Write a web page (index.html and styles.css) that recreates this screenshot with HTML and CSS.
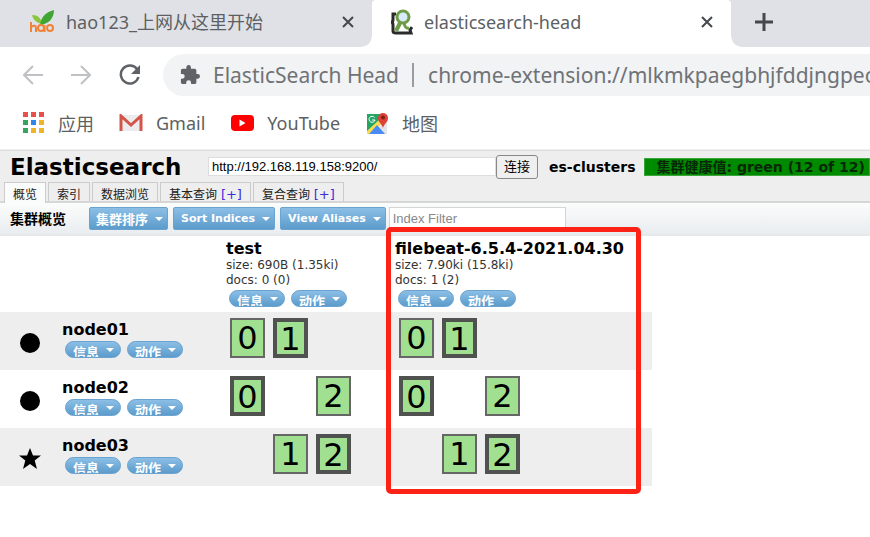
FILE: index.html
```html
<!DOCTYPE html>
<html lang="zh-CN">
<head>
<meta charset="utf-8">
<title>elasticsearch-head</title>
<link rel="stylesheet" href="styles.css">
</head>
<body>
<header class="browser">
  <div class="tabstrip">
    <div class="tab tab-first">
      <svg class="tab-icon" width="26" height="26" viewBox="0 0 26 26">
        <path d="M3 6C9 6 12 9 13 15C8 14 4 11 3 6Z" fill="#8cc63f"/>
        <path d="M11 16C12 8 17 3 25 1C25 9 20 15 11 16Z" fill="#3fa535"/>
        <g fill="none" stroke="#f08337" stroke-width="2"><path d="M2 13v10M2 18q5-3 5 1v4"/><circle cx="12" cy="19" r="3"/><path d="M15.500 16v7"/><circle cx="21" cy="19" r="3"/></g>
      </svg>
      <span class="tab-title">hao123_上网从这里开始</span>
      <button class="icon-button" aria-label="关闭"><svg width="14" height="14" viewBox="0 0 14 14"><path d="M2 2l10 10M12 2L2 12" stroke="#45484c" stroke-width="2" fill="none"/></svg></button>
    </div>
    <div class="tab tab-active">
      <svg class="tab-icon" width="24" height="26" viewBox="0 0 24 26">
        <path d="M7 5H4v6q0 2-2 2q2 0 2 3v6q0 2 3 2h15l-1-3l2-3" fill="none" stroke="#2b2b2b" stroke-width="3"/>
        <path d="M12 12L7 22" stroke="#6f9c48" stroke-width="4"/><path d="M15 14q1 6 5 5" fill="none" stroke="#6f9c48" stroke-width="3"/>
        <circle cx="14" cy="8" r="6" fill="#d9eafa" stroke="#6f9c48" stroke-width="3"/>
      </svg>
      <span class="tab-title">elasticsearch-head</span>
      <button class="icon-button" aria-label="关闭"><svg width="14" height="14" viewBox="0 0 14 14"><path d="M2 2l10 10M12 2L2 12" stroke="#45484c" stroke-width="2" fill="none"/></svg></button>
    </div>
    <button class="icon-button new-tab" aria-label="新标签页"><svg width="18" height="18" viewBox="0 0 18 18"><path d="M9 0v18M0 9h18" stroke="#45484c" stroke-width="3"/></svg></button>
  </div>

  <div class="toolbar">
    <button class="icon-button" aria-label="后退"><svg width="20" height="20" viewBox="0 0 20 20"><path d="M20 10H2M10 1L1 10l9 9" fill="none" stroke="#bfc1c4" stroke-width="2"/></svg></button>
    <button class="icon-button" aria-label="前进"><svg width="20" height="20" viewBox="0 0 20 20"><path d="M0 10h18M10 1l9 9l-9 9" fill="none" stroke="#bfc1c4" stroke-width="2"/></svg></button>
    <button class="icon-button reload" aria-label="刷新"><svg width="22" height="22" viewBox="0 0 22 22"><path d="M18 5A9 9 0 1 0 19.500 13" fill="none" stroke="#5f6368" stroke-width="2.500"/><path d="M21 1v9h-9z" fill="#5f6368"/></svg></button>
    <form class="omnibox">
      <svg width="20" height="20" viewBox="1 1 22 22"><path fill="#5f6368" d="M20.500 11H19V7c0-1.100-.9-2-2-2h-4V3.500a2.500 2.500 0 0 0-5 0V5H4c-1.100 0-2 .9-2 2v3.800h1.500a2.700 2.700 0 0 1 0 5.400H2V20c0 1.100.9 2 2 2h3.800v-1.500a2.700 2.700 0 0 1 5.400 0V22H17c1.100 0 2-.9 2-2v-4h1.500a2.500 2.500 0 0 0 0-5z"/></svg>
      <label class="page-name" for="address">ElasticSearch Head</label>
      <input class="address" id="address" value="chrome-extension://mlkmkpaegbhjfddjngpeolfljgkpoejk">
    </form>
  </div>

  <nav class="bookmarks">
    <a href="#apps"><svg width="22" height="22" viewBox="0 0 22 22"><path fill="#e8504a" d="M0 0h5v5H0zM8 0h5v5H8zM16 0h5v5h-5z"/><path fill="#3aa35a" d="M0 8h5v5H0zM0 16h5v5H0z"/><path fill="#2f86ea" d="M8 8h5v5H8z"/><path fill="#f0b429" d="M16 8h5v5h-5zM8 16h5v5H8zM16 16h5v5h-5z"/></svg>应用</a>
    <a href="#gmail"><svg width="24" height="18" viewBox="0 0 24 18"><path d="M2 1h20v16H2z" fill="#ececec"/><path d="M2 17V2l10 9l10-9v15" fill="none" stroke="#d3544a" stroke-width="3"/></svg>Gmail</a>
    <a href="#youtube"><svg width="24" height="18" viewBox="0 0 24 18"><rect x="1" y="1" width="23" height="16" rx="4" fill="#f00"/><path d="M9.500 5.500v7l6-3.500z" fill="#fff"/></svg>YouTube</a>
    <a href="#maps"><svg width="24" height="24" viewBox="0 0 24 24"><path d="M2 3h20v20H2z" fill="#e3e5e8"/><path d="M2 3h15v5L2 22z" fill="#23a566"/><path d="M2 20L15 8l3 3L6 23H2z" fill="#fddc4f"/><path d="M12 14l8 9H4z" fill="#4b8bf5"/><path d="M9.500 6.500A3 3 0 1 0 10 9H7" fill="none" stroke="#fff"/><path d="M18 18c0-5-5-6-5-11a5 5 0 0 1 10 0c0 5-5 6-5 11z" fill="#dc4237"/><circle cx="18" cy="6.500" r="2" fill="#7d2019"/></svg>地图</a>
  </nav>
</header>

<main>
  <form class="cluster-head">
    <h1>Elasticsearch</h1>
    <input class="cluster-url" aria-label="集群地址" value="http://192.168.119.158:9200/">
    <button class="connect" type="button">连接</button>
    <strong class="cluster-name">es-clusters</strong>
    <strong class="health">集群健康值: green (12 of 12)</strong>
  </form>
  <nav class="views">
    <a class="view view-current" href="#overview">概览</a>
    <a class="view" href="#indices">索引</a>
    <a class="view" href="#browser">数据浏览</a>
    <a class="view" href="#query">基本查询 <span class="plus">[+]</span></a>
    <a class="view" href="#compound">复合查询 <span class="plus">[+]</span></a>
  </nav>
  <div class="actions">
    <h2>集群概览</h2>
    <button class="menu cjk">集群排序</button>
    <button class="menu">Sort Indices</button>
    <button class="menu">View Aliases</button>
    <input class="filter" aria-label="Index Filter" placeholder="Index Filter">
  </div>

  <table class="overview">
    <colgroup><col class="col-mark"><col class="col-node"><col class="col-test"><col class="col-index"></colgroup>
    <thead>
      <tr>
        <td></td><td></td>
        <th scope="col">
          <div class="name">test</div>
          <div class="stat">size: 690B (1.35ki)</div>
          <div class="stat">docs: 0 (0)</div>
          <div class="pills"><button class="pill">信息</button><button class="pill">动作</button></div>
        </th>
        <th scope="col" class="marked">
          <div class="name">filebeat-6.5.4-2021.04.30</div>
          <div class="stat">size: 7.90ki (15.8ki)</div>
          <div class="stat">docs: 1 (2)</div>
          <div class="pills"><button class="pill">信息</button><button class="pill">动作</button></div>
        </th>
      </tr>
    </thead>
    <tbody>
      <tr>
        <td class="mark"><svg width="22" height="22" viewBox="0 0 22 22"><circle cx="11" cy="11" r="10"/></svg></td>
        <th scope="row"><div class="name">node01</div><div class="pills"><button class="pill">信息</button><button class="pill">动作</button></div></th>
        <td><div class="shards"><span class="shard s0">0</span><span class="shard s1 primary">1</span></div></td>
        <td><div class="shards"><span class="shard s0">0</span><span class="shard s1 primary">1</span></div></td>
      </tr>
      <tr>
        <td class="mark"><svg width="22" height="22" viewBox="0 0 22 22"><circle cx="11" cy="11" r="10"/></svg></td>
        <th scope="row"><div class="name">node02</div><div class="pills"><button class="pill">信息</button><button class="pill">动作</button></div></th>
        <td><div class="shards"><span class="shard s0 primary">0</span><span class="shard s2">2</span></div></td>
        <td><div class="shards"><span class="shard s0 primary">0</span><span class="shard s2">2</span></div></td>
      </tr>
      <tr>
        <td class="mark"><svg width="22" height="22" viewBox="0 0 22 22"><path d="M11 0l3 7.500h8l-6.300 5L18 21l-7-5l-7 5l2.300-8.500L0 7.500h8z"/></svg></td>
        <th scope="row"><div class="name">node03</div><div class="pills"><button class="pill">信息</button><button class="pill">动作</button></div></th>
        <td><div class="shards"><span class="shard s1">1</span><span class="shard s2 primary">2</span></div></td>
        <td><div class="shards"><span class="shard s1">1</span><span class="shard s2 primary">2</span></div></td>
      </tr>
    </tbody>
  </table>
</main>
</body>
</html>
```

FILE: styles.css
```css
*, *::before, *::after { box-sizing: border-box; }
body {
  margin: 0;
  background: #fff;
  color: #000;
  font: 12px "DejaVu Sans", "Noto Sans CJK SC", sans-serif;
}
main { padding-bottom: 24px; }
h1, h2 { margin: 0; }
svg { display: block; flex: none; }
button, input { font: inherit; margin: 0; }
a { color: inherit; text-decoration: none; }

/* Browser frame */
.browser {
  font: 18px "Noto Sans", "Noto Sans CJK SC", sans-serif;
  color: #5c5f63;
}
.icon-button { border: 0; padding: 0; background: none; flex: none; }
.tabstrip { display: flex; height: 47px; background: #dfe1e6; }
.tab {
  display: flex;
  align-items: center;
  width: 359px;
  padding: 0 17px 3px;
  position: relative;
}
.tab-first { width: 372px; padding-left: 29px; }
.tab-title { flex: 1; margin-left: 11px; white-space: nowrap; line-height: 24px; }
.tab-active { background: #fff; border-radius: 4px 4px 0 0; }
.tab-active::before,
.tab-active::after {
  content: "";
  position: absolute;
  bottom: 0;
  width: 10px;
  height: 10px;
}
.tab-active::before { left: -10px; background: radial-gradient(circle at 0 0, transparent 9px, #fff 10px); }
.tab-active::after { right: -10px; background: radial-gradient(circle at 100% 0, transparent 9px, #fff 10px); }
.new-tab { margin: 0 24px 4px; }

.toolbar {
  display: flex;
  align-items: center;
  gap: 28px;
  height: 56px;
  padding-left: 23px;
}
.reload { margin-right: -6px; }
.omnibox {
  flex: 1;
  min-width: 0;
  display: flex;
  align-items: center;
  height: 42px;
  padding-left: 17px;
  background: #f1f3f4;
  border-radius: 21px 0 0 21px;
  font-size: 21px;
  color: #6f7276;
}
.page-name {
  margin-left: 13px;
  padding-right: 13px;
  border-right: 2px solid #9a9c9f;
  line-height: 24px;
  white-space: nowrap;
}
.address {
  flex: 1;
  min-width: 0;
  border: 0;
  padding: 0 0 0 14px;
  background: none;
  color: inherit;
  outline: 0;
}
.bookmarks {
  display: flex;
  align-items: center;
  gap: 25px;
  height: 47px;
  padding: 0 23px 6px;
  border-bottom: 1px solid #f0f0f0;
}
.bookmarks a { display: flex; align-items: center; gap: 13px; }

/* Cluster header */
.cluster-head {
  display: flex;
  align-items: center;
  height: 32px;
  padding-left: 10px;
  background: #eee;
  border-top: 1px solid #ddd;
  white-space: nowrap;
  overflow: hidden;
}
.cluster-head h1 { flex: none; width: 198px; font-size: 23px; line-height: 28px; }
.cluster-url {
  flex: none;
  width: 288px;
  height: 19px;
  padding: 0 3px;
  border: 1px solid #ddd;
  background: #fff;
  font: 13px "Liberation Sans", sans-serif;
}
.connect {
  flex: none;
  width: 42px;
  height: 24px;
  padding: 0;
  border: 1px solid #888;
  border-radius: 3px;
  background: #efefef;
  font-size: 13px;
  line-height: 20px;
}
.cluster-name { margin-left: 11px; font-size: 14px; }
.health {
  flex: 1 0 auto;
  margin-left: 9px;
  padding-left: 11px;
  border: 1px solid #3aa53a;
  background: #008a00;
  color: #062806;
  font-size: 14px;
  line-height: 16px;
}
.views {
  display: flex;
  gap: 2px;
  height: 21px;
  padding-left: 4px;
  background: #eee;
  border-bottom: 2px solid #d6d6d6;
}
.view {
  height: 19px;
  padding: 3px 8px 0;
  border: 1px solid #ccc;
  border-bottom: 0;
  line-height: 18px;
  overflow: hidden;
  color: #222;
  white-space: nowrap;
}
.view-current { height: 21px; background: #fafbfb; }
.plus { color: #3d2bd8; font-size: 13px; }

.actions {
  display: flex;
  align-items: center;
  gap: 5px;
  height: 33px;
  padding-left: 10px;
  border-bottom: 2px solid #e6e8e9;
  background: linear-gradient(#fbfcfc, #e9edef);
}
.actions h2 { margin-right: 18px; font-size: 14px; line-height: 20px; }
.menu, .pill {
  display: flex;
  align-items: center;
  justify-content: space-between;
  border: 1px solid #6ba3d0;
  background: linear-gradient(#8cbfe6, #5b9bcb);
  color: #fff;
  font-weight: bold;
  white-space: nowrap;
}
.menu::after, .pill::after {
  content: "";
  border: 4px solid transparent;
  border-top-color: #fff;
  border-bottom: 0;
}
.menu {
  height: 23px;
  gap: 7px;
  padding: 0 4px 0 7px;
  border-radius: 2px;
  font-size: 11px;
}
.menu.cjk { font-size: 13px; padding-left: 6px; }
.filter {
  width: 177px;
  height: 24px;
  margin-left: -2px;
  padding: 0 3px;
  border: 1px solid #d5d5d5;
  background: #fff;
  font: 13px "Liberation Sans", sans-serif;
}
.filter::placeholder { color: #888; }

/* Shard table */
.overview { table-layout: fixed; width: 652px; border-collapse: collapse; }
.col-mark { width: 62px; }
.col-node { width: 164px; }
.col-test { width: 169px; }
.overview td, .overview th {
  padding: 0;
  text-align: left;
  vertical-align: top;
  font-weight: normal;
}
.overview thead th { height: 76px; padding-top: 3px; }
.overview tbody tr { height: 58px; }
.overview tbody tr:nth-child(odd) { background: #eee; }
.overview tbody th { padding-top: 8px; }
.overview tbody td { padding-top: 6px; }
.overview .mark { padding: 20px 0 0 19px; }
.name { font-size: 16px; font-weight: bold; line-height: 19px; }
.stat { color: #333; line-height: 15px; }
.pills { display: flex; gap: 6px; padding: 2px 0 0 3px; }
.pill {
  width: 56px;
  height: 17px;
  padding: 5px 6px 0 7px;
  border-radius: 9px;
  font-size: 13px;
  line-height: 17px;
  overflow: hidden;
}
.pill::after { margin: 0 0 4px; }
.shards {
  display: grid;
  grid-template-columns: repeat(3, 35px);
  gap: 8px;
  padding-left: 4px;
}
.shard {
  height: 40px;
  border: 2px solid #666;
  background: #a0e090;
  font-size: 32px;
  line-height: 36px;
  text-align: center;
}
.primary { border: 4px solid #505250; line-height: 34px; }
.s0 { grid-column: 1; }
.s1 { grid-column: 2; }
.s2 { grid-column: 3; }

/* Highlight frame laid over the whole index column */
.marked { position: relative; }
.marked::after {
  content: "";
  position: absolute;
  left: -9px;
  top: -9px;
  width: 255px;
  height: 267px;
  border: 5px solid #fc2216;
  border-radius: 5px;
}
```
